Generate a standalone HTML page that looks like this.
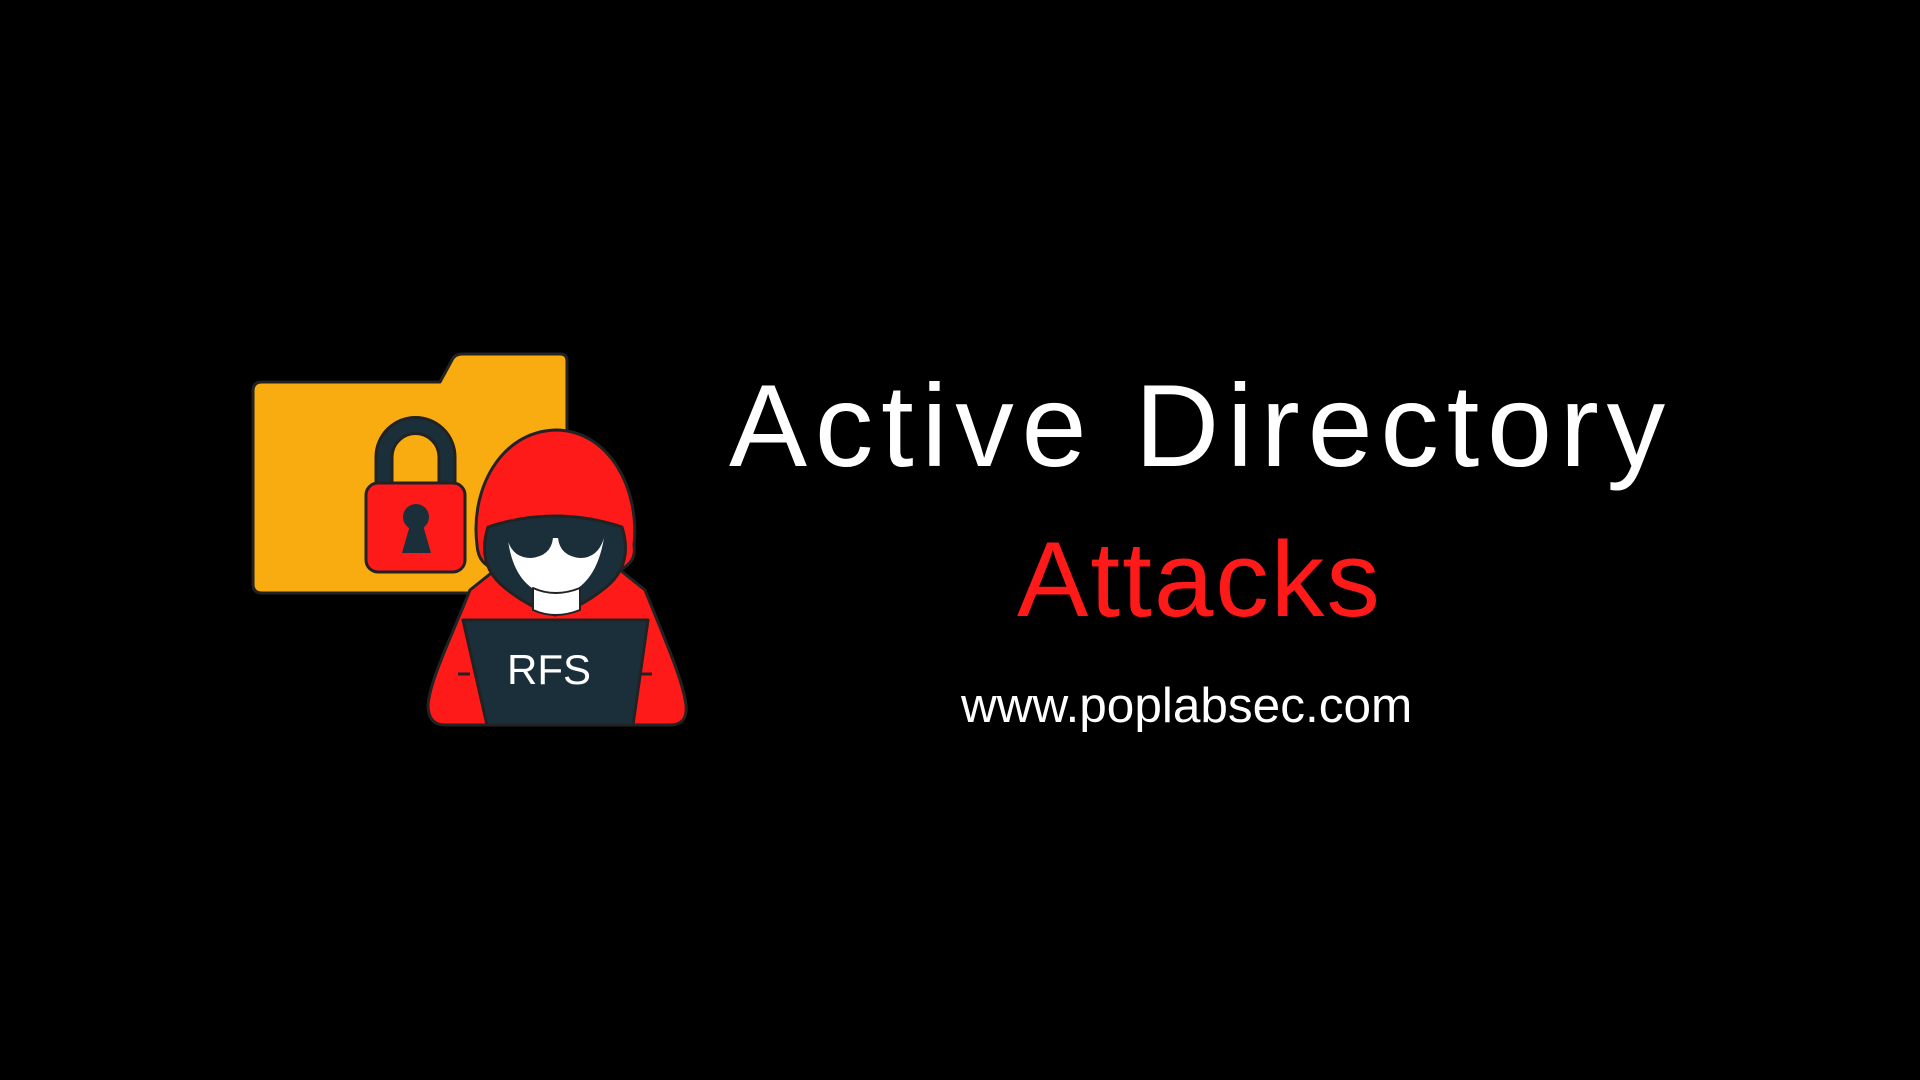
<!DOCTYPE html>
<html><head><meta charset="utf-8"><style>
html,body{margin:0;padding:0;background:#000;width:1920px;height:1080px;overflow:hidden}
.t{position:absolute;font-family:"Liberation Sans",sans-serif;white-space:nowrap;line-height:1}
</style></head><body>
<svg width="1920" height="1080" style="position:absolute;left:0;top:0">
<g stroke="#222" stroke-width="3" stroke-linejoin="round">
<path d="M262 382 H440 L452 360 Q455 354 462 354 H560 Q567 354 567 361 V586 Q567 593 560 593 H262 Q253 593 253 584 V391 Q253 382 262 382 Z" fill="#F8AC10"/>
<path d="M376 483 V457 A39.5 39.5 0 0 1 455 457 V483 H439 V457 A23.5 23.5 0 0 0 392 457 V483 Z" fill="#1B2F3A"/>
<rect x="366" y="483" width="99" height="89" rx="12" fill="#FF1A1A"/>
<circle cx="416" cy="517" r="13" fill="#1B2F3A" stroke="none"/>
<path d="M410 525 L402 553 H431 L423 525 Z" fill="#1B2F3A" stroke="none"/>
<path d="M555 430 C500 432 470 490 477 545 C478 560 485 565 495 570 L470 590 C450 640 430 680 428 705 Q428 725 445 725 H670 Q688 725 686 705 C683 680 665 640 645 590 L620 570 C630 565 636 558 634 545 C640 490 610 430 555 430 Z" fill="#FF1A1A"/>
<path d="M488 527 Q555 505 622 527 Q634 565 605 588 Q580 608 555 615 Q530 608 505 588 Q476 565 488 527 Z" fill="#1B2F3A"/>
<path d="M507 530 Q555 515 605 530 Q600 575 575 590 Q555 598 535 590 Q510 575 507 530 Z" fill="#fff" stroke="none"/>
<path d="M533 588 Q555 598 580 588 V610 Q555 620 533 610 Z" fill="#fff" stroke-width="2"/>
<path d="M505 526 Q555 518 607 526 L604 538 Q598 558 580 558 Q560 556 558 538 H553 Q551 556 531 558 Q512 558 507 538 Z" fill="#1B2F3A" stroke="none"/>
<path d="M463 620 H648 L633 725 H487 Z" fill="#1B2F3A"/>
<line x1="458" y1="674" x2="470" y2="674"/><line x1="640" y1="674" x2="652" y2="674"/>
</g>
<text x="549" y="684" font-family="Liberation Sans, sans-serif" font-size="42" fill="#fff" text-anchor="middle">RFS</text>
</svg>
<div class="t" style="left:729px;top:367px;font-size:117px;letter-spacing:7.8px;color:#fff">Active Directory</div>
<div class="t" style="left:1017px;top:526px;font-size:107px;letter-spacing:2px;color:#FF1A1A">Attacks</div>
<div class="t" style="left:961px;top:681px;font-size:49.5px;letter-spacing:0px;color:#fff">www.poplabsec.com</div>
</body></html>
